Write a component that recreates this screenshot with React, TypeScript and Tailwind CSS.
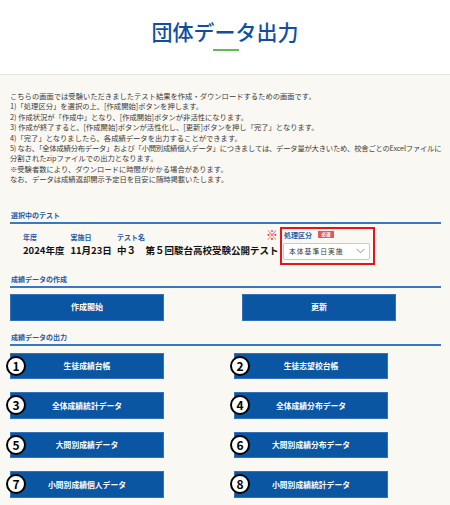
import React from "react";

const lines = [
  "こちらの画面では受験いただきましたテスト結果を作成・ダウンロードするための画面です。",
  "1)「処理区分」を選択の上、[作成開始]ボタンを押します。",
  "2) 作成状況が「作成中」となり、[作成開始]ボタンが非活性になります。",
  "3) 作成が終了すると、[作成開始]ボタンが活性化し、[更新]ボタンを押し「完了」となります。",
  "4)「完了」となりましたら、各成績データを出力することができます。",
  "5) なお、「全体成績分布データ」および「小問別成績個人データ」につきましては、データ量が大きいため、校舎ごとのExcelファイルに",
  "分割されたzipファイルでの出力となります。",
  "※受験者数により、ダウンロードに時間がかかる場合があります。",
  "なお、データは成績返却開示予定日を目安に随時掲載いたします。",
];

const outputs = [
  ["生徒成績台帳", "生徒志望校台帳"],
  ["全体成績統計データ", "全体成績分布データ"],
  ["大問別成績データ", "大問別成績分布データ"],
  ["小問別成績個人データ", "小問別成績統計データ"],
];

function SectionHeading({ children }: { children: React.ReactNode }) {
  return (
    <div className="text-[7px] leading-[10px] font-bold text-[#1d5aa6] pl-[1px] pb-[2px] border-b-2 border-[#3a78c0]">
      {children}
    </div>
  );
}

function OutButton({ n, label }: { n: number; label: string }) {
  return (
    <div className="relative w-[154px] h-[26.5px] bg-[#0a56a2] border border-[#3372b8] flex items-center justify-center text-white text-[7.8px] font-semibold">
      <div className="absolute left-[-5px] top-1/2 -translate-y-1/2 w-[20px] h-[20px] rounded-full bg-white border-2 border-black flex items-center justify-center text-black text-[12px] font-bold leading-none">
        {n}
      </div>
      {label}
    </div>
  );
}

export default function App() {
  return (
    <div className="w-[450px] min-h-[505px] bg-[#faf8f3] font-['Noto_Sans_CJK_JP','Noto_Sans',sans-serif] overflow-hidden">
      <header className="h-[75px] bg-white border-b border-[#e6e4e0] flex flex-col items-center">
        <h1 className="mt-[19px] text-[21px] leading-[24px] font-medium text-[#114f9e]">
          団体データ出力
        </h1>
        <div className="mt-[6px] w-[26px] h-[2px] bg-[#62bb55] ml-[1px]" />
      </header>

      <main className="px-[10px] pr-[9px]">
        <div className="pt-[16px] text-[7.3px] leading-[10.4px] text-[#3a3a3a]">
          {lines.map((l, i) => (
            <div key={i} className={i === 5 ? "whitespace-nowrap tracking-[-0.2px]" : "whitespace-nowrap"}>
              {l}
            </div>
          ))}
        </div>

        <div className="mt-[25px]">
          <SectionHeading>選択中のテスト</SectionHeading>
        </div>

        <div className="flex mt-[3px]">
          <div className="w-[270px] pl-[13px] pt-[5px]">
            <div className="flex text-[7px] leading-[10px] font-bold text-[#1d5aa6]">
              <div className="w-[47.4px]">年度</div>
              <div className="w-[46.6px]">実施日</div>
              <div>テスト名</div>
            </div>
            <div className="flex mt-[1px] text-[9.5px] leading-[14px] font-bold text-[#111]">
              <div className="w-[47.4px]">2024年度</div>
              <div className="w-[46.6px]">11月23日</div>
              <div className="whitespace-nowrap">中３　第５回駿台高校受験公開テスト</div>
            </div>
          </div>
          <div className="relative w-[95px] h-[38px] border-2 border-[#e8141a] pl-[1px] pt-[1px]">
            <span className="absolute left-[-16px] top-[0px] text-[12px] leading-[12px] text-[#e8141a]">※</span>
            <div className="flex items-center">
              <span className="text-[7px] leading-[10px] font-bold text-[#1d5aa6] ml-[1px]">処理区分</span>
              <span className="ml-[6px] w-[16px] h-[6.5px] bg-[#e05a5a] text-white text-[4.5px] leading-[6.5px] font-bold flex items-center justify-center">
                必須
              </span>
            </div>
            <div className="mt-[3px] w-[87px] h-[17.5px] bg-white border border-[#c9c9c9] rounded-[2px] flex items-center justify-between pl-[5px] pr-[4px]">
              <span className="text-[6.8px] tracking-[1px] text-[#333] whitespace-nowrap">本体基準日実施</span>
              <svg width="9" height="6" viewBox="0 0 9 6" fill="none">
                <path d="M0.5 0.8 L4.5 4.8 L8.5 0.8" stroke="#888" strokeWidth="0.9" />
              </svg>
            </div>
          </div>
        </div>

        <div className="mt-[9px]">
          <SectionHeading>成績データの作成</SectionHeading>
        </div>

        <div className="flex gap-[78px] mt-[6px]">
          <div className="w-[154px] h-[27px] bg-[#0a56a2] border border-[#3372b8] flex items-center justify-center text-white text-[8px] font-semibold">
            作成開始
          </div>
          <div className="w-[154px] h-[27px] bg-[#0a56a2] border border-[#3372b8] flex items-center justify-center text-white text-[8px] font-semibold">
            更新
          </div>
        </div>

        <div className="mt-[11px]">
          <SectionHeading>成績データの出力</SectionHeading>
        </div>

        <div className="mt-[7px] flex flex-col gap-[13px]">
          {outputs.map((row, i) => (
            <div key={i} className="flex gap-[70px]">
              <OutButton n={i * 2 + 1} label={row[0]} />
              <OutButton n={i * 2 + 2} label={row[1]} />
            </div>
          ))}
        </div>
      </main>
    </div>
  );
}
